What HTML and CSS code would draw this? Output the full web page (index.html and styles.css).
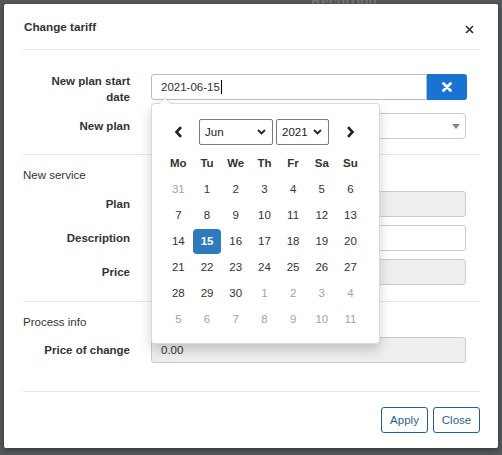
FILE: index.html
```html
<!DOCTYPE html>
<html>
<head>
<meta charset="utf-8">
<link rel="stylesheet" href="styles.css">
</head>
<body>
<div class="bg-text">Recurring</div>
<div class="modal">
  <div class="modal-header">
    <h4 class="title">Change tariff</h4>
    <span class="close"><svg width="9" height="9" viewBox="0 0 9 9"><path d="M1 1L8 8M8 1L1 8" stroke="#333" stroke-width="1.7"/></svg></span>
  </div>
  <div class="modal-body">
    <div class="row row-top">
      <label class="lbl lbl-2">New plan start date</label>
      <div class="ctrl input-group">
        <div class="input focus">2021-06-15<span class="cursor"></span></div>
        <span class="btn-clear"><svg width="10" height="10" viewBox="0 0 10 10"><path d="M1.5 1.5L8.5 8.5M8.5 1.5L1.5 8.5" stroke="#fff" stroke-width="2.8" stroke-linecap="round"/></svg></span>
      </div>
    </div>
    <div class="row">
      <label class="lbl">New plan</label>
      <div class="ctrl input select"><span class="tri"></span></div>
    </div>
    <div class="divider d1"></div>
    <div class="section">New service</div>
    <div class="row"><label class="lbl">Plan</label><div class="ctrl input disabled"></div></div>
    <div class="row"><label class="lbl">Description</label><div class="ctrl input"></div></div>
    <div class="row"><label class="lbl">Price</label><div class="ctrl input disabled"></div></div>
    <div class="divider d2"></div>
    <div class="section s2">Process info</div>
    <div class="row"><label class="lbl">Price of change</label><div class="ctrl input disabled">0.00</div></div>
    <div class="divider d3"></div>
  </div>
  <div class="modal-footer">
    <span class="btn">Apply</span>
    <span class="btn">Close</span>
  </div>

  <div class="datepicker">
    <div class="dp-nav">
      <span class="nav-btn"><svg width="9" height="12" viewBox="0 0 9 12"><path d="M7 1.2L2.5 6L7 10.8" fill="none" stroke="#222" stroke-width="2.6"/></svg></span>
      <span class="dp-select month">Jun<svg width="9" height="6" viewBox="0 0 9 6"><path d="M1 1L4.5 4.5L8 1" fill="none" stroke="#222" stroke-width="1.8"/></svg></span>
      <span class="dp-select year">2021<svg width="9" height="6" viewBox="0 0 9 6"><path d="M1 1L4.5 4.5L8 1" fill="none" stroke="#222" stroke-width="1.8"/></svg></span>
      <span class="spacer"></span>
      <span class="nav-btn"><svg width="9" height="12" viewBox="0 0 9 12"><path d="M2 1.2L6.5 6L2 10.8" fill="none" stroke="#222" stroke-width="2.6"/></svg></span>
    </div>
    <div class="dp-grid">
      <span class="dow">Mo</span><span class="dow">Tu</span><span class="dow">We</span><span class="dow">Th</span><span class="dow">Fr</span><span class="dow">Sa</span><span class="dow">Su</span>
      <span class="day old">31</span><span class="day">1</span><span class="day">2</span><span class="day">3</span><span class="day">4</span><span class="day">5</span><span class="day">6</span>
      <span class="day">7</span><span class="day">8</span><span class="day">9</span><span class="day">10</span><span class="day">11</span><span class="day">12</span><span class="day">13</span>
      <span class="day">14</span><span class="day"><b class="sel">15</b></span><span class="day">16</span><span class="day">17</span><span class="day">18</span><span class="day">19</span><span class="day">20</span>
      <span class="day">21</span><span class="day">22</span><span class="day">23</span><span class="day">24</span><span class="day">25</span><span class="day">26</span><span class="day">27</span>
      <span class="day">28</span><span class="day">29</span><span class="day">30</span><span class="day old">1</span><span class="day old">2</span><span class="day old">3</span><span class="day old">4</span>
      <span class="day old">5</span><span class="day old">6</span><span class="day old">7</span><span class="day old">8</span><span class="day old">9</span><span class="day old">10</span><span class="day old">11</span>
    </div>
  </div>
</div>
</body>
</html>
```
FILE: styles.css
```css
* { box-sizing: border-box; }
html, body { margin: 0; padding: 0; }
body {
  background: #55585c;
  font-family: "Liberation Sans", Arial, sans-serif;
  font-size: 11.5px;
  color: #333;
  width: 502px;
  height: 455px;
  overflow: hidden;
  position: relative;
  padding: 4px 4px 0 4px;
}
.bg-text {
  position: absolute;
  left: 311px;
  top: -7px;
  font-weight: bold;
  font-size: 14px;
  color: #74767a;
}
.modal {
  position: relative;
  width: 494px;
  height: 444px;
  background: #fff;
  border-radius: 2px;
  box-shadow: 0 2px 6px rgba(0,0,0,.4);
  padding: 0 18px 0 19px;
}
.modal-header {
  display: flex;
  align-items: center;
  justify-content: space-between;
  padding: 15px 0 14px 0;
  border-bottom: 1px solid #e5e5e5;
  height: 46px;
}
.title {
  margin: 0 0 0 1px;
  font-size: 11.7px;
  font-weight: bold;
  line-height: 16px;
  color: #333;
}
.close {
  display: flex;
  margin: 4px 6px 0 0;
}
.modal-body {
  padding-top: 24px;
}
.row {
  display: flex;
  align-items: center;
  gap: 20px;
  height: 26px;
  margin-bottom: 8px;
}
.row-top {
  align-items: flex-start;
  height: 31px;
}
.lbl {
  width: 108px;
  flex: none;
  text-align: right;
  font-weight: bold;
  line-height: 16px;
  padding-right: 1px;
  color: #333;
}
.lbl-2 { margin-top: -1px; padding-left: 20px; }
.ctrl {
  flex: 1;
  margin-right: 14px;
}
.input {
  height: 26px;
  border: 1px solid #ccc;
  border-radius: 3px;
  padding: 0 9px;
  line-height: 24px;
  color: #333;
  background: #fff;
  position: relative;
}
.input.disabled { background: #eee; }
.input.focus { border-color: #b6bcc4; }
.cursor {
  display: inline-block;
  width: 1px;
  height: 14px;
  background: #000;
  vertical-align: -3px;
  margin-left: 1px;
}
.input-group {
  display: flex;
  margin-right: 13px;
}
.input-group .input {
  flex: 1;
  border-radius: 3px 0 0 3px;
}
.btn-clear {
  width: 40px;
  height: 26px;
  background: #1b73d1;
  border-radius: 0 3px 3px 0;
  display: flex;
  align-items: center;
  justify-content: center;
}
.select { border-radius: 4px; }
.tri {
  position: absolute;
  right: 5px;
  top: 10px;
  border-left: 4px solid transparent;
  border-right: 4px solid transparent;
  border-top: 5px solid #888;
}
.divider {
  height: 1px;
  background: #e5e5e5;
}
.d1 { margin-top: 15px; }
.d2 { margin-top: 16px; }
.d3 { margin-top: 28px; }
.section {
  line-height: 16px;
  margin: 12px 0 8px 0;
  color: #333;
}
.s2 { margin-bottom: 7px; }
.modal-footer {
  display: flex;
  justify-content: flex-end;
  gap: 5px;
  padding-top: 15px;
}
.btn {
  width: 47px;
  height: 26px;
  border: 1px solid #215f98;
  border-radius: 3px;
  display: flex;
  align-items: center;
  justify-content: center;
  color: #2a5f8f;
  background: #fff;
}

.datepicker {
  position: absolute;
  left: 147px;
  top: 99px;
  width: 229px;
  height: 241px;
  background: #fff;
  border: 1px solid rgba(0,0,0,.15);
  border-radius: 4px;
  box-shadow: 0 6px 12px rgba(0,0,0,.18);
  padding: 15px 14px 0 12px;
}
.datepicker::before {
  content: "";
  position: absolute;
  left: 6px;
  top: -7px;
  border-left: 7px solid transparent;
  border-right: 7px solid transparent;
  border-bottom: 7px solid rgba(0,0,0,.15);
}
.datepicker::after {
  content: "";
  position: absolute;
  left: 7px;
  top: -6px;
  border-left: 6px solid transparent;
  border-right: 6px solid transparent;
  border-bottom: 6px solid #fff;
}
.dp-nav {
  display: flex;
  align-items: center;
  height: 26px;
}
.nav-btn {
  width: 29px;
  flex: none;
  display: flex;
  justify-content: center;
}
.dp-select {
  height: 26px;
  border: 1px solid #7a7a7a;
  border-radius: 2px;
  display: flex;
  align-items: center;
  justify-content: space-between;
  padding: 0 6px 0 5px;
  color: #222;
  flex: none;
}
.month { width: 74px; margin-left: 6px; }
.year { width: 53px; margin-left: 3px; }
.spacer { flex: 1; }
.dp-grid {
  display: grid;
  grid-template-columns: repeat(7, 28.7px);
  grid-auto-rows: 26px;
  margin-top: 5px;
}
.dow, .day {
  display: flex;
  align-items: center;
  justify-content: center;
}
.dow { font-weight: bold; color: #333; }
.day { color: #333; }
.day.old { color: #a3a3a3; }
.sel {
  width: 29px;
  height: 25px;
  background: #2e7abd;
  color: #fff;
  border-radius: 4px;
  display: flex;
  align-items: center;
  justify-content: center;
  font-weight: bold;
}
```
